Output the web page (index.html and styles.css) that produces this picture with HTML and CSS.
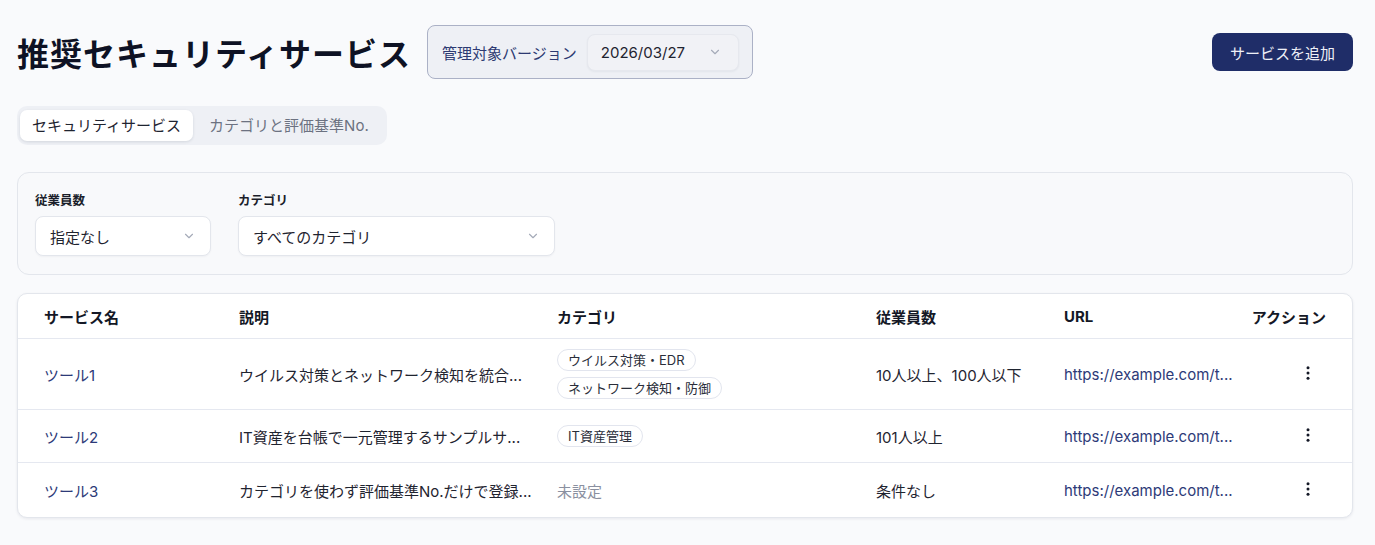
FILE: index.html
```html
<!DOCTYPE html>
<html lang="ja">
  <head>
    <meta charset="UTF-8" />
    <meta name="viewport" content="width=device-width, initial-scale=1.0" />
    <title>推奨セキュリティサービス</title>
    <link rel="stylesheet" href="styles.css">
  </head>
  <body>
    <div class="page">
      <div class="page-header">
        <h1 class="title">推奨セキュリティサービス</h1>
        <div class="version-box">
          <span class="version-label">管理対象バージョン</span>
          <div class="select version-select">
            <span>2026/03/27</span>
            <svg class="chevron" viewBox="0 0 16 16"><path d="M4 6l4 4 4-4" /></svg>
          </div>
        </div>
        <button class="primary-button">サービスを追加</button>
      </div>

      <div class="tabs">
        <div class="tab active">セキュリティサービス</div>
        <div class="tab">カテゴリと評価基準No.</div>
      </div>

      <div class="filter-card">
        <div class="filter">
          <div class="filter-label">従業員数</div>
          <div class="select filter-select small">
            <span>指定なし</span>
            <svg class="chevron" viewBox="0 0 16 16"><path d="M4 6l4 4 4-4" /></svg>
          </div>
        </div>
        <div class="filter">
          <div class="filter-label">カテゴリ</div>
          <div class="select filter-select wide">
            <span>すべてのカテゴリ</span>
            <svg class="chevron" viewBox="0 0 16 16"><path d="M4 6l4 4 4-4" /></svg>
          </div>
        </div>
      </div>

      <div class="table-card">
        <table class="service-table">
          <colgroup>
            <col style="width: 205px" />
            <col style="width: 318px" />
            <col style="width: 319px" />
            <col style="width: 188px" />
            <col style="width: 170px" />
            <col />
          </colgroup>
          <thead>
            <tr>
              <th class="first">サービス名</th>
              <th>説明</th>
              <th>カテゴリ</th>
              <th>従業員数</th>
              <th>URL</th>
              <th class="action">アクション</th>
            </tr>
          </thead>
          <tbody>
            <tr>
              <td class="first"><a class="link">ツール1</a></td>
              <td>ウイルス対策とネットワーク検知を統合...</td>
              <td>
                <div class="tags">
                  <span class="tag">ウイルス対策・EDR</span>
                  <span class="tag">ネットワーク検知・防御</span>
                </div>
              </td>
              <td>10人以上、100人以下</td>
              <td><a class="link url">https://example.com/t...</a></td>
              <td class="action">
                <button class="menu-button">
                  <svg viewBox="0 0 16 16"><circle cx="8" cy="2.8" r="1.5" /><circle cx="8" cy="8" r="1.5" /><circle cx="8" cy="13.2" r="1.5" /></svg>
                </button>
              </td>
            </tr>
            <tr>
              <td class="first"><a class="link">ツール2</a></td>
              <td>IT資産を台帳で一元管理するサンプルサ...</td>
              <td>
                <div class="tags">
                  <span class="tag">IT資産管理</span>
                </div>
              </td>
              <td>101人以上</td>
              <td><a class="link url">https://example.com/t...</a></td>
              <td class="action">
                <button class="menu-button">
                  <svg viewBox="0 0 16 16"><circle cx="8" cy="2.8" r="1.5" /><circle cx="8" cy="8" r="1.5" /><circle cx="8" cy="13.2" r="1.5" /></svg>
                </button>
              </td>
            </tr>
            <tr>
              <td class="first"><a class="link">ツール3</a></td>
              <td>カテゴリを使わず評価基準No.だけで登録...</td>
              <td><span class="muted">未設定</span></td>
              <td>条件なし</td>
              <td><a class="link url">https://example.com/t...</a></td>
              <td class="action">
                <button class="menu-button">
                  <svg viewBox="0 0 16 16"><circle cx="8" cy="2.8" r="1.5" /><circle cx="8" cy="8" r="1.5" /><circle cx="8" cy="13.2" r="1.5" /></svg>
                </button>
              </td>
            </tr>
          </tbody>
        </table>
      </div>
    </div>
  </body>
</html>
```

FILE: styles.css
```css
body {
  margin: 0;
  background: #f9fafc;
  color: #1f2430;
  font-family: Inter, "Noto Sans CJK JP", sans-serif;
  font-size: 15px;
}

.page {
  padding: 25px 22px 20px 17px;
}

.page-header {
  display: flex;
  align-items: center;
  gap: 16px;
}

.title {
  margin: 0;
  font-size: 32px;
  font-weight: 700;
  color: #0e1224;
  letter-spacing: 1px;
}

.version-box {
  display: flex;
  align-items: center;
  gap: 10px;
  height: 52px;
  padding: 0 13px 0 14px;
  background: #eef0f5;
  border: 1px solid #abb1c6;
  border-radius: 8px;
}

.version-label {
  color: #2d3a72;
  font-size: 15px;
}

.select {
  display: flex;
  align-items: center;
  justify-content: space-between;
  box-sizing: border-box;
  border-radius: 8px;
  color: #1f2430;
}

.version-select {
  width: 152px;
  height: 37px;
  padding: 0 16px 0 13px;
  background: #f1f2f6;
  border: 1px solid #e6e8ee;
  box-shadow: 0 1px 2px rgba(20, 30, 60, 0.05);
}

.chevron {
  width: 14px;
  height: 14px;
  fill: none;
  stroke: #a4aab8;
  stroke-width: 1.3;
  stroke-linecap: round;
  stroke-linejoin: round;
}

.primary-button {
  margin-left: auto;
  height: 38px;
  padding: 0 18px;
  background: #1f2d68;
  color: #eef0f7;
  border: none;
  border-radius: 8px;
  font-family: inherit;
  font-size: 15px;
  cursor: pointer;
}

.tabs {
  display: inline-flex;
  gap: 4px;
  margin-top: 27px;
  padding: 4px 6px 4px 3px;
  background: #eef0f5;
  border-radius: 10px;
}

.tab {
  height: 31px;
  line-height: 31px;
  padding: 0 12px;
  color: #6c7281;
  border-radius: 7px;
}

.tab.active {
  background: #fff;
  color: #1f2430;
  box-shadow: 0 1px 3px rgba(20, 30, 60, 0.12);
}

.filter-card {
  display: flex;
  gap: 27px;
  margin-top: 27px;
  padding: 17px 17px 18px;
  border: 1px solid #e3e6ec;
  border-radius: 12px;
  background: #f8f9fb;
}

.filter-label {
  font-size: 12.5px;
  font-weight: 700;
  color: #1a1e2a;
  margin-bottom: 7px;
}

.filter-select {
  height: 40px;
  padding: 0 14px;
  background: #fff;
  border: 1px solid #e3e6ec;
  box-shadow: 0 1px 2px rgba(20, 30, 60, 0.04);
}

.filter-select.small {
  width: 176px;
}

.filter-select.wide {
  width: 317px;
}

.table-card {
  margin-top: 18px;
  background: #fff;
  border: 1px solid #e3e6ec;
  border-radius: 10px;
  box-shadow: 0 1px 3px rgba(20, 30, 60, 0.08);
  overflow: hidden;
}

.service-table {
  width: 100%;
  border-collapse: collapse;
  table-layout: fixed;
}

.service-table th {
  height: 44px;
  padding: 0 16px;
  text-align: left;
  font-weight: 700;
  color: #141826;
  white-space: nowrap;
}

.service-table td {
  padding: 10px 16px;
  border-top: 1px solid #e5e8f0;
  white-space: nowrap;
}

.service-table tbody tr:last-child td {
  height: 34px;
}

.service-table .first {
  padding-left: 26px;
}

.service-table .action {
  text-align: right;
  padding-right: 26px;
}

.link {
  color: #2d3a78;
  text-decoration: none;
}

.tags {
  display: flex;
  flex-direction: column;
  align-items: flex-start;
  gap: 6px;
}

.tag {
  height: 22px;
  line-height: 21px;
  box-sizing: border-box;
  padding: 0 10px;
  border: 1px solid #e2e5ee;
  border-radius: 999px;
  font-size: 13px;
  color: #2a2e3a;
}

.muted {
  color: #8a90a0;
}

.menu-button {
  width: 32px;
  height: 32px;
  padding: 0;
  margin-right: 2px;
  background: none;
  border: none;
  cursor: pointer;
  vertical-align: middle;
}

.menu-button svg {
  width: 16px;
  height: 16px;
  fill: #141826;
}
```
